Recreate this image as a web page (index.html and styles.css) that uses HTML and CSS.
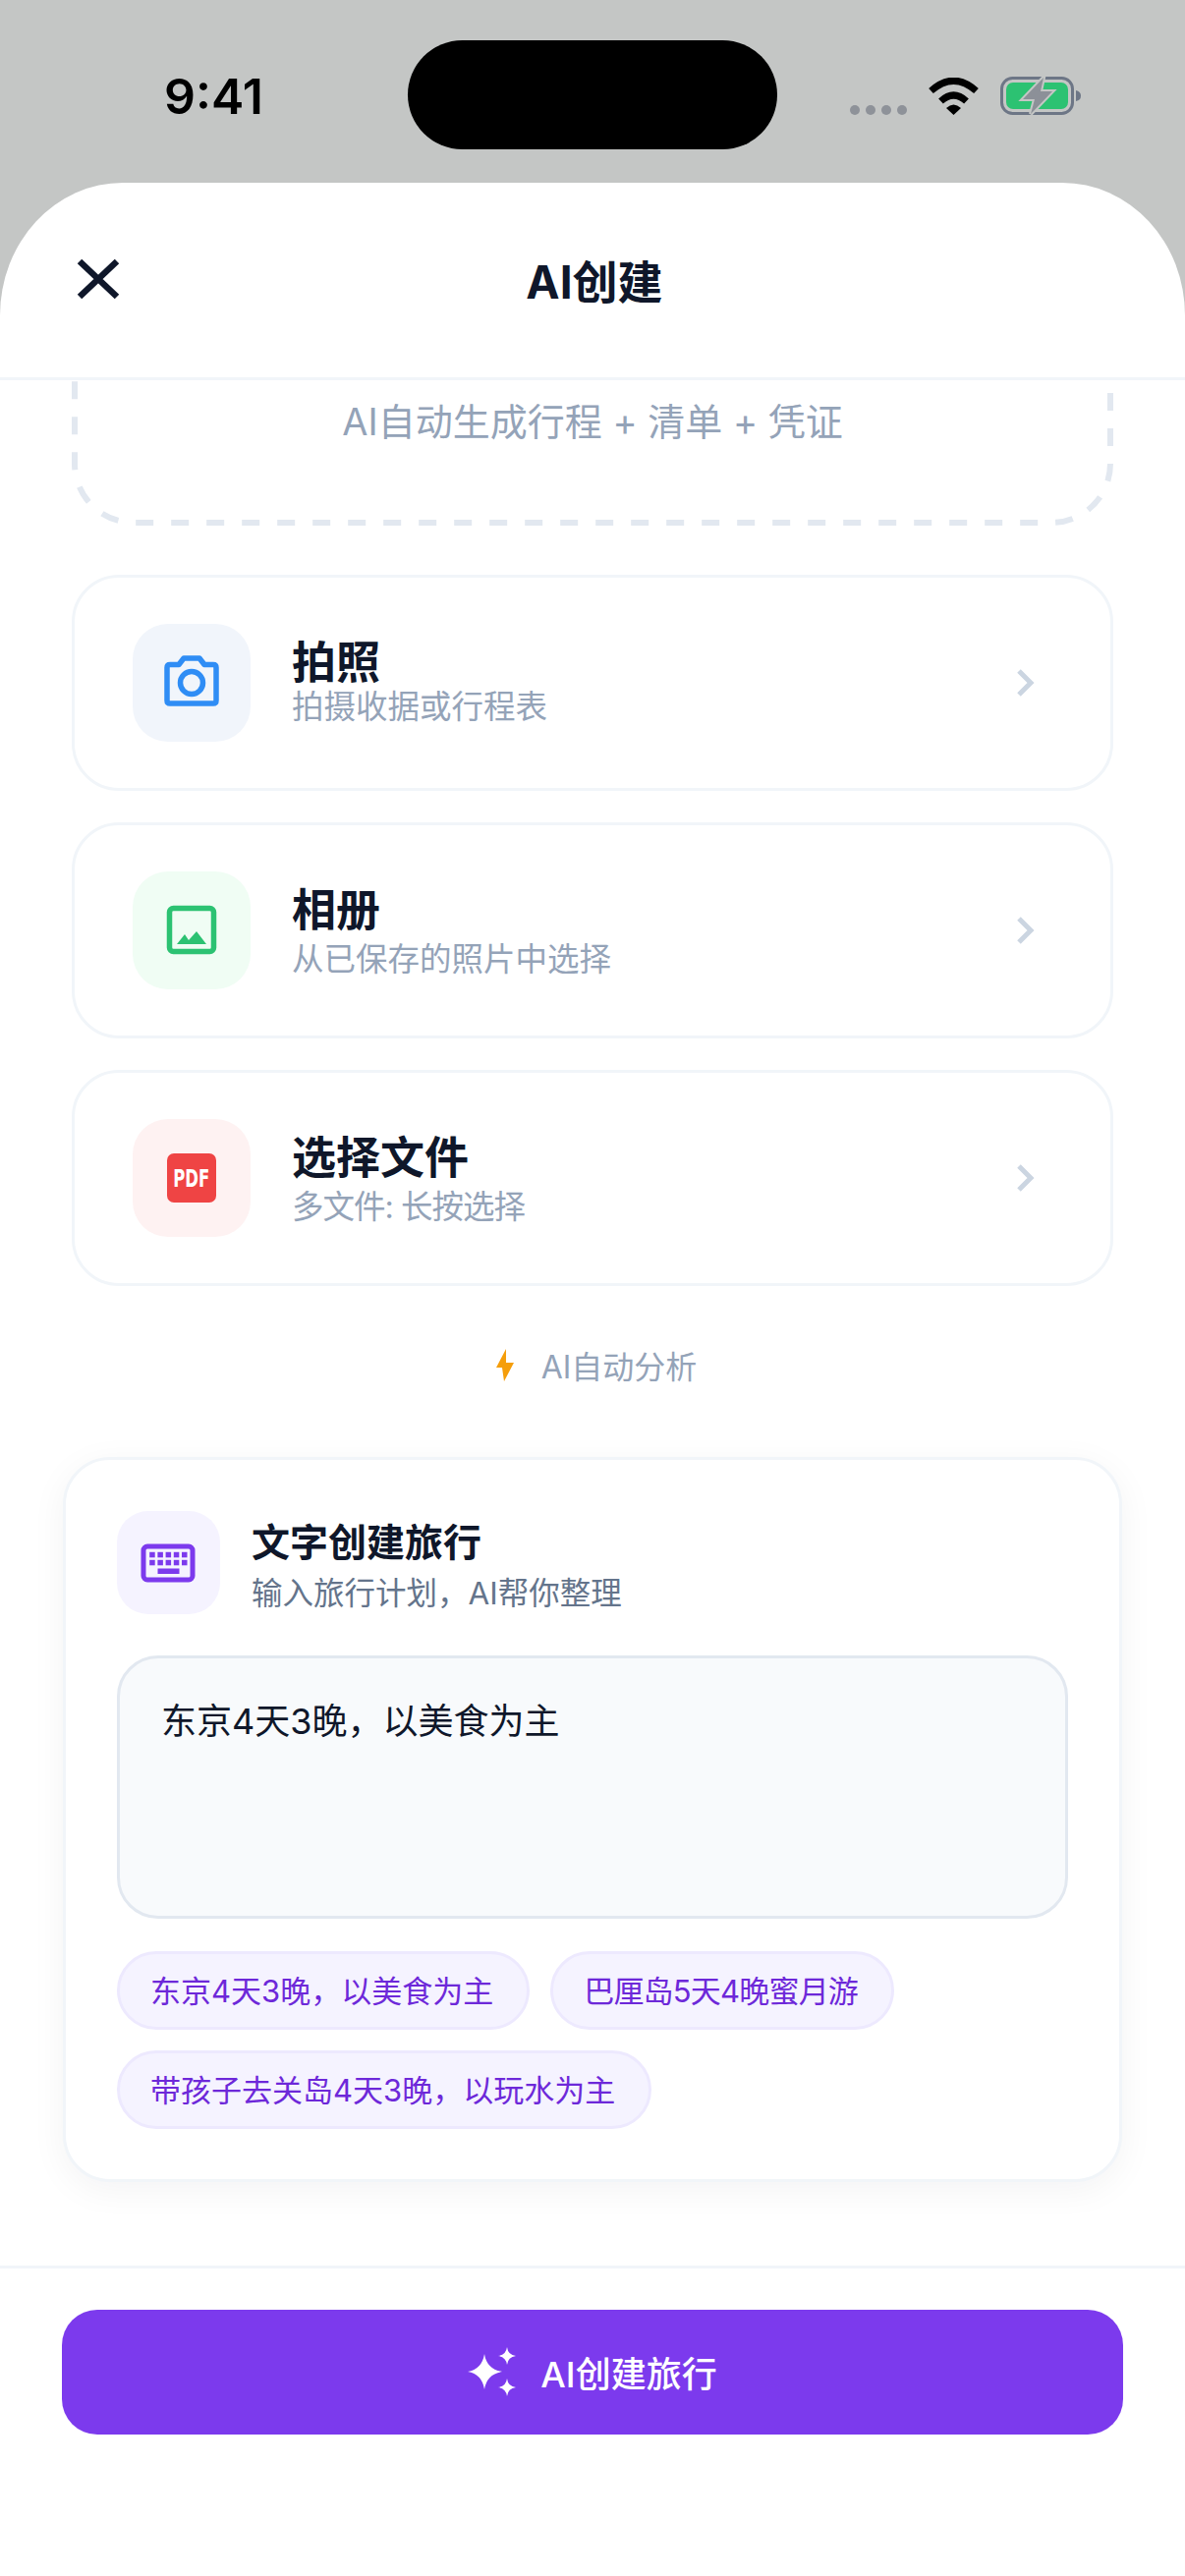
FILE: index.html
```html
<!DOCTYPE html>
<html lang="zh-CN">
<head>
  <meta charset="UTF-8">
  <title>AI创建</title>
  <link rel="stylesheet" href="styles.css">
</head>
<body>

<div class="status-bar">
  <div class="time">9:41</div>
  <div class="island"></div>
  <div class="status-icons">
    <div class="dots"><span></span><span></span><span></span><span></span></div>
    <svg class="wifi" width="51" height="38" viewBox="0 0 51 38">
      <path d="M2.5 13.5Q25.500 -7 48.500 13.500" fill="none" stroke="#000" stroke-width="7"/>
      <path d="M12.500 24Q25.500 12 38.500 24" fill="none" stroke="#000" stroke-width="7"/>
      <path d="M18 31Q25.500 24 33 31L25.500 38Z" fill="#000"/>
    </svg>
    <svg class="battery" width="82" height="39" viewBox="0 0 82 39">
      <rect x="1.500" y="1.500" width="72" height="36" rx="11" fill="none" stroke="#6d7686" stroke-width="3"/>
      <rect x="6" y="6" width="63" height="27" rx="7" fill="#2cc272"/>
      <path d="M77 14Q82 15 82 19.500Q82 24 77 25Z" fill="#6d7686"/>
      <path d="M44 1L23 23H35L31 38L53 15H41Z" fill="#8c9098" stroke="#c4c6c5" stroke-width="4" paint-order="stroke"/>
    </svg>
  </div>
</div>

<div class="sheet">
  <div class="sheet-header">
    <svg class="close" width="44" height="42" viewBox="0 0 44 42">
      <path d="M3 3L41 39M41 3L3 39" fill="none" stroke="#0f172a" stroke-width="6.500"/>
    </svg>
    <div class="sheet-title">AI创建</div>
    <div></div>
  </div>

  <div class="content">
    <div class="drop-box">
      <svg class="drop-line" width="1060" height="245" viewBox="0 0 1060 245">
        <rect x="3" y="3" width="1054" height="239" rx="60" fill="none" stroke="#e2e8f0" stroke-width="6" stroke-dasharray="18 18" stroke-dashoffset="5"/>
      </svg>
      <div class="drop-text">AI自动生成行程 + 清单 + 凭证</div>
    </div>

    <div class="source-list">
      <div class="source-card">
        <div class="tile tile-blue">
          <svg width="60" height="60" viewBox="0 0 60 60">
            <path d="M8 11.500H17L22 5H38L43 11.500H52Q55 11.500 55 14.500V48Q55 51 52 51H8Q5 51 5 48V14.500Q5 11.500 8 11.500Z" fill="none" stroke="#2f8df5" stroke-width="5.500" stroke-linejoin="round"/>
            <circle cx="30" cy="30" r="11.500" fill="none" stroke="#2f8df5" stroke-width="5.500"/>
          </svg>
        </div>
        <div class="source-text">
          <div class="source-name">拍照</div>
          <div class="source-desc">拍摄收据或行程表</div>
        </div>
        <svg class="chevron" width="36" height="36" viewBox="0 0 36 36">
          <path d="M6 6L18 18L6 30" fill="none" stroke="#cbd5e1" stroke-width="5"/>
        </svg>
      </div>

      <div class="source-card">
        <div class="tile tile-green">
          <svg width="60" height="60" viewBox="0 0 60 60">
            <rect x="7.500" y="7.500" width="45" height="44" rx="4" fill="none" stroke="#2cc272" stroke-width="5.500"/>
            <path d="M15 44L23 34L27 40L35 31L45 44Z" fill="#2cc272"/>
          </svg>
        </div>
        <div class="source-text">
          <div class="source-name">相册</div>
          <div class="source-desc">从已保存的照片中选择</div>
        </div>
        <svg class="chevron" width="36" height="36" viewBox="0 0 36 36">
          <path d="M6 6L18 18L6 30" fill="none" stroke="#cbd5e1" stroke-width="5"/>
        </svg>
      </div>

      <div class="source-card">
        <div class="tile tile-red">
          <div class="pdf-badge"><span>PDF</span></div>
        </div>
        <div class="source-text">
          <div class="source-name">选择文件</div>
          <div class="source-desc tight">多文件: 长按选择</div>
        </div>
        <svg class="chevron" width="36" height="36" viewBox="0 0 36 36">
          <path d="M6 6L18 18L6 30" fill="none" stroke="#cbd5e1" stroke-width="5"/>
        </svg>
      </div>
    </div>

    <div class="auto-row">
      <svg width="18" height="33" viewBox="0 0 18 33">
        <path d="M10 0L0 19H6L8 33L18 14H10Z" fill="#f59e0b"/>
      </svg>
      <span>AI自动分析</span>
    </div>

    <div class="text-card">
      <div class="text-head">
        <div class="tile-small">
          <svg width="60" height="60" viewBox="0 0 60 60">
            <rect x="4" y="13" width="50" height="34" rx="4" fill="none" stroke="#7c3aed" stroke-width="5"/>
            <g fill="#7c3aed">
              <rect x="10.200" y="18.800" width="5.500" height="5.500"/>
              <rect x="18.400" y="18.800" width="5.500" height="5.500"/>
              <rect x="26.600" y="18.800" width="5.500" height="5.500"/>
              <rect x="34.800" y="18.800" width="5.500" height="5.500"/>
              <rect x="43" y="18.800" width="5.500" height="5.500"/>
              <rect x="10.200" y="26.800" width="5.500" height="5.500"/>
              <rect x="18.400" y="26.800" width="5.500" height="5.500"/>
              <rect x="26.600" y="26.800" width="5.500" height="5.500"/>
              <rect x="34.800" y="26.800" width="5.500" height="5.500"/>
              <rect x="43" y="26.800" width="5.500" height="5.500"/>
              <rect x="18.500" y="35.500" width="22" height="5.500"/>
            </g>
          </svg>
        </div>
        <div class="text-head-copy">
          <div class="text-title">文字创建旅行</div>
          <div class="text-desc">输入旅行计划，AI帮你整理</div>
        </div>
      </div>
      <div class="plan-input">东京4天3晚，以美食为主</div>
      <div class="chips">
        <div class="chip">东京4天3晚，以美食为主</div>
        <div class="chip tight">巴厘岛5天4晚蜜月游</div>
        <div class="chip">带孩子去关岛4天3晚，以玩水为主</div>
      </div>
    </div>
  </div>

  <div class="footer">
    <div class="create-btn">
      <svg width="50" height="50" viewBox="0 0 50 50">
        <g fill="#fff">
          <path d="M17 7Q19.500 22.500 35 25Q19.500 27.500 17 43Q14.500 27.500 0 25Q14.500 22.500 17 7Z"/>
          <path d="M40 0Q41 8 49 9Q41 10 40 18Q39 10 31 9Q39 8 40 0Z"/>
          <path d="M40 32Q41 40 49 41Q41 42 40 50Q39 42 31 41Q39 40 40 32Z"/>
        </g>
      </svg>
      <span>AI创建旅行</span>
    </div>
  </div>
</div>

</body>
</html>
```

FILE: styles.css
```css
* {
  box-sizing: border-box;
}
body {
  margin: 0;
  width: 1206px;
  height: 2622px;
  overflow: hidden;
  background-color: #c4c6c5;
  font-family: Inter, "Noto Sans CJK SC", sans-serif;
  color: #0f172a;
}

/* status bar */
.status-bar {
  display: flex;
  align-items: flex-start;
  height: 186px;
}
.time {
  width: 415px;
  padding: 68px 0 0 167px;
  font-size: 50px;
  line-height: 60px;
  font-weight: 600;
  color: #000;
}
.island {
  width: 376px;
  height: 111px;
  margin-top: 41px;
  border-radius: 56px;
  background-color: #000;
}
.status-icons {
  display: flex;
  align-items: flex-end;
  margin: 78px 0 0 74px;
}
.dots {
  display: flex;
  gap: 6px;
  margin-right: 22px;
}
.dots span {
  width: 10px;
  height: 10px;
  border-radius: 50%;
  background-color: #8e9299;
}
.wifi {
  margin-right: 22px;
}

/* sheet */
.sheet {
  display: flex;
  flex-direction: column;
  height: 2436px;
  border-radius: 125px 125px 0 0 / 135px 135px 0 0;
  background-color: white;
}
.sheet-header {
  display: grid;
  grid-template-columns: 1fr auto 1fr;
  align-items: center;
  flex: none;
  height: 201px;
  padding: 0 74px 2px 78px;
  border-bottom: 3px solid #f1f5f9;
}
.sheet-title {
  font-size: 46px;
  font-weight: 700;
  color: #0f172a;
}
.content {
  flex: 1;
  min-height: 0;
  overflow: hidden;
  padding: 0 73px;
}

/* dashed box, top part scrolled away */
.drop-box {
  position: relative;
  height: 245px;
  margin: -97px 0 50px;
  padding-top: 112px;
  text-align: center;
}
.drop-line {
  position: absolute;
  top: 0;
  left: 0;
}
.drop-text {
  position: relative;
  font-size: 38px;
  line-height: 54px;
  color: #94a3b8;
}

.source-list {
  display: flex;
  flex-direction: column;
  gap: 32px;
}
.source-card {
  display: flex;
  align-items: center;
  gap: 42px;
  height: 220px;
  padding: 0 63px 0 59px;
  border: 3px solid #f1f5f9;
  border-radius: 48px;
}
.tile {
  display: flex;
  align-items: center;
  justify-content: center;
  flex: none;
  width: 120px;
  height: 120px;
  border-radius: 36px;
}
.tile-blue {
  background-color: #f1f5fb;
}
.tile-green {
  background-color: #f0fdf4;
}
.tile-red {
  background-color: #fef2f2;
}
.pdf-badge {
  display: flex;
  align-items: center;
  justify-content: center;
  width: 50px;
  height: 50px;
  border-radius: 7px;
  background-color: #ef4444;
  font-family: "DejaVu Sans", sans-serif;
  font-size: 22px;
  font-weight: 700;
  color: white;
}
.pdf-badge span {
  transform: scale(0.75, 1.12);
}
.source-text {
  flex: 1;
}
.source-name {
  height: 50px;
  padding-top: 2px;
  font-size: 45px;
  line-height: 50px;
  font-weight: 700;
  color: #0f172a;
}
.source-desc {
  font-size: 32.5px;
  line-height: 44px;
  color: #94a3b8;
}
.source-card + .source-card .source-desc {
  margin: 5px 0 -5px;
}
.source-desc.tight {
  letter-spacing: -1px;
}

.auto-row {
  display: flex;
  align-items: center;
  justify-content: center;
  gap: 28px;
  height: 50px;
  margin: 55px 0 69px;
  padding-left: 8px;
  font-size: 32px;
  color: #94a3b8;
}

/* text input card */
.text-card {
  margin: 0 -9px;
  height: 738px;
  padding: 52px;
  border: 3px solid #f1f5f9;
  border-radius: 48px;
  background-color: white;
  box-shadow: 0 8px 36px rgba(15, 23, 42, 0.05);
}
.text-head {
  display: flex;
  align-items: center;
  gap: 32px;
  height: 105px;
}
.text-head-copy {
  margin-top: 8px;
}
.tile-small {
  display: flex;
  align-items: center;
  justify-content: center;
  flex: none;
  width: 105px;
  height: 105px;
  border-radius: 32px;
  background-color: #f5f3ff;
}
.text-title {
  font-size: 39px;
  line-height: 50px;
  font-weight: 700;
  color: #0f172a;
}
.text-desc {
  margin-top: 5px;
  font-size: 31.500px;
  line-height: 44px;
  color: #64748b;
}
.plan-input {
  height: 268px;
  margin-top: 42px;
  padding: 39px 42px;
  border: 3px solid #e2e8f0;
  border-radius: 42px;
  background-color: #f8fafc;
  font-size: 36px;
  line-height: 50px;
  color: #0f172a;
}
.chips {
  display: flex;
  flex-wrap: wrap;
  gap: 21px;
  margin-top: 33px;
}
.chip {
  display: flex;
  align-items: center;
  height: 80px;
  padding: 0 34px 3px 31px;
  border: 3px solid #ede9fe;
  border-radius: 40px;
  background-color: #f5f3ff;
  font-size: 31px;
  color: #6d28d9;
}
.chip.tight {
  letter-spacing: -0.800px;
}

/* bottom button */
.footer {
  flex: none;
  height: 316px;
  padding: 42px 63px 0;
  border-top: 3px solid #f1f5f9;
}
.create-btn {
  display: flex;
  align-items: center;
  justify-content: center;
  gap: 24px;
  height: 127px;
  padding-bottom: 2px;
  border-radius: 36px;
  background-color: #7c3aed;
  font-size: 36px;
  font-weight: 500;
  color: white;
}
```
